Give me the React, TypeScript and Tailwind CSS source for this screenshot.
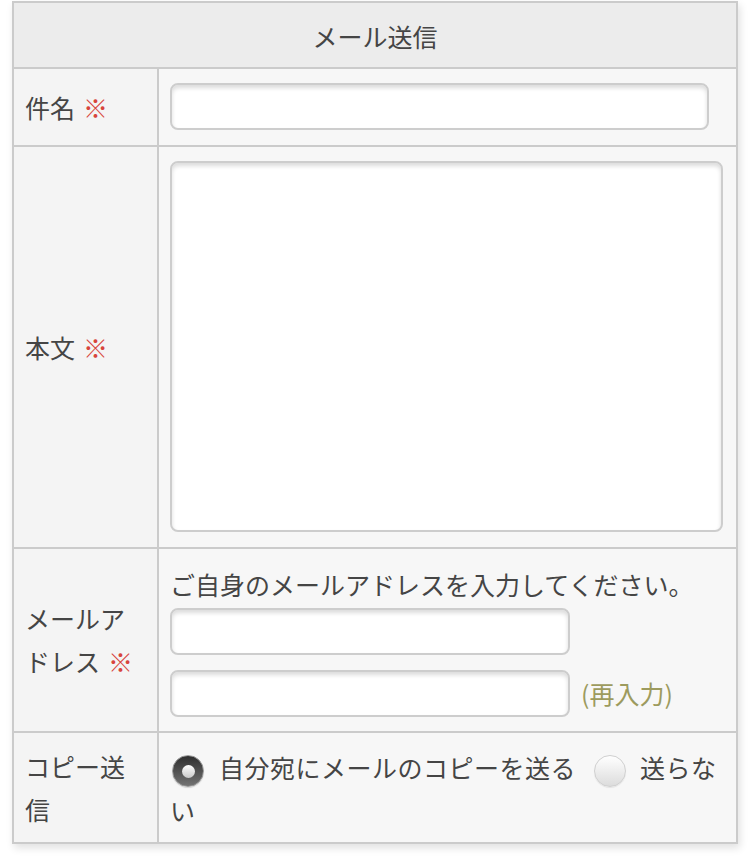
import React, { useState } from 'react';

const inputCls =
  'block h-[47px] rounded-[8px] border-2 border-[#cdcdcd] bg-white shadow-[inset_0_3px_4px_rgba(0,0,0,0.14)] outline-none';

function Required() {
  return <span className="ml-[8px] text-[#d8443c]">※</span>;
}

function Row({ label, children, last, cellClass }: { label: React.ReactNode; children: React.ReactNode; last?: boolean; cellClass?: string }) {
  return (
    <div className={`flex ${last ? '' : 'border-b-2 border-[#cbcbcb]'}`}>
      <div className="flex w-[145px] shrink-0 items-center border-r-2 border-[#cbcbcb] bg-[#f4f4f4] pl-[11px] pr-[8px] leading-[43px]">
        <div>{label}</div>
      </div>
      <div className={`min-w-0 flex-1 bg-[#f7f7f7] pl-[11px] pr-[13px] ${cellClass ?? 'pt-[14px] pb-[15px]'}`}>{children}</div>
    </div>
  );
}

function Radio({ checked }: { checked: boolean }) {
  if (checked) {
    return (
      <span className="relative inline-block h-[32px] w-[32px] rounded-full border border-[#9a9a9a] bg-[linear-gradient(to_bottom,#2f2f2f,#737373)] align-middle shadow-[0_1px_1px_rgba(0,0,0,0.15)]">
        <span className="absolute left-[9px] top-[9px] h-[13px] w-[13px] rounded-full bg-[linear-gradient(to_bottom,#ffffff,#c9c9c9)]" />
      </span>
    );
  }
  return (
    <span className="inline-block h-[32px] w-[32px] rounded-full border border-[#d0d0d0] bg-[linear-gradient(to_bottom,#ffffff,#dcdcdc)] align-middle shadow-[0_1px_1px_rgba(0,0,0,0.08)]" />
  );
}

export default function App() {
  const [copy, setCopy] = useState(true);

  return (
    <div className="min-h-screen bg-white px-3 pt-px text-[25px] text-[#454545] [font-family:'Noto_Sans_CJK_JP',sans-serif]">
      <div className="border-2 border-[#cbcbcb] shadow-[2px_4px_8px_rgba(0,0,0,0.12)]">
        {/* header */}
        <div className="flex h-[66px] items-center justify-center border-b-2 border-[#cbcbcb] bg-[#ececec] pt-[3px]">
          メール送信
        </div>

        <Row label={<>件名<Required /></>}>
          <input type="text" className={`${inputCls} w-[539px]`} />
        </Row>

        <Row label={<>本文<Required /></>}>
          <textarea className={`${inputCls} h-[371px] w-full resize-none`} />
        </Row>

        <Row label={<>メールアドレス<Required /></>} cellClass="pt-[14px] pb-[14px]">
          <div className="leading-[43px]">ご自身のメールアドレスを入力してください。</div>
          <input type="text" className={`${inputCls} mt-[2px] w-[400px]`} />
          <div className="mt-[15px] flex items-center">
            <input type="text" className={`${inputCls} w-[400px]`} />
            <span className="ml-[11px] text-[#9d9b5e]">(再入力)</span>
          </div>
        </Row>

        <Row label="コピー送信" last cellClass="pt-[13px] pb-[10px]">
          <div className="leading-[43px] tracking-[0.5px]">
            <label className="cursor-pointer" onClick={() => setCopy(true)}>
              <span className="ml-[2px] mr-[15px]">
                <Radio checked={copy} />
              </span>
              自分宛にメールのコピーを送る
            </label>
            <label className="cursor-pointer" onClick={() => setCopy(false)}>
              <span className="ml-[18px] mr-[14px]">
                <Radio checked={!copy} />
              </span>
              送らない
            </label>
          </div>
        </Row>
      </div>
    </div>
  );
}
